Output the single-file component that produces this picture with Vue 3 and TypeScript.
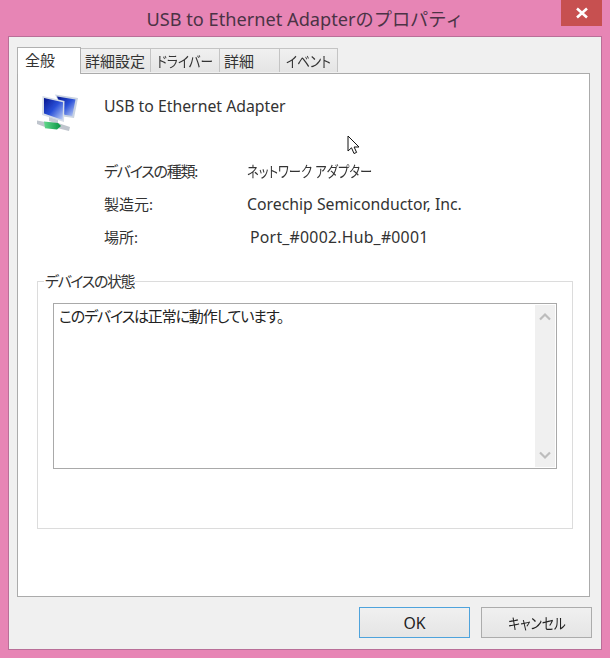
<script setup lang="ts">
const tabs = [
  { label: '全般', width: 64, active: true, narrow: false },
  { label: '詳細設定', width: 70, narrow: false },
  { label: 'ドライバー', width: 69, narrow: true },
  { label: '詳細', width: 60, narrow: false },
  { label: 'イベント', width: 58, narrow: true },
]
const rows = [
  { label: 'デバイスの種類:', value: 'ネットワーク アダプター', latin: false, tight: true },
  { label: '製造元:', value: 'Corechip Semiconductor, Inc.', latin: true },
  { label: '場所:', value: 'Port_#0002.Hub_#0001', latin: true, shifted: true },
]
</script>

<template>
  <div class="window">
    <header class="titlebar">
      <h1 class="title">USB to Ethernet Adapterのプロパティ</h1>
      <button class="close" aria-label="閉じる">
        <svg width="14" height="12" viewBox="0 0 14 12"><path d="M2 1.5l10 9M12 1.5l-10 9" stroke="#fff" stroke-width="2.6" fill="none" /></svg>
      </button>
    </header>

    <div class="client">
      <nav class="tabs">
        <div v-for="t in tabs" :key="t.label" class="tab" :class="{ active: t.active }" :style="{ width: t.width + 'px' }">
          <span :class="{ narrow: t.narrow }">{{ t.label }}</span>
        </div>
      </nav>

      <section class="panel">
        <div class="device">
          <svg class="device-icon" width="42" height="42" viewBox="0 0 42 42">
            <defs>
              <linearGradient id="scr" x1="0" y1="0" x2="1" y2="1">
                <stop offset="0" stop-color="#06168f" />
                <stop offset="0.5" stop-color="#2a50d8" />
                <stop offset="1" stop-color="#c4d4f6" />
              </linearGradient>
              <linearGradient id="cable" x1="0" y1="0" x2="1" y2="0">
                <stop offset="0" stop-color="#63d88c" />
                <stop offset="1" stop-color="#079544" />
              </linearGradient>
              <filter id="soft"><feGaussianBlur stdDeviation="0.35" /></filter>
            </defs>
            <g filter="url(#soft)">
              <path d="M19 1.5l23 3.5-4 20-11-1.5-3-12z" fill="#c9d3e2" />
              <path d="M21 3.5l18.5 3-3.2 16.5-8-1.2z" fill="url(#scr)" />
              <path d="M6.5 3l22 5-.5 21L6 22z" fill="#d6dde8" />
              <path d="M8 5l19 4.2-.3 17.8L8 20.5z" fill="url(#scr)" />
              <path d="M13 24l9 3v4l-9-3z" fill="#c5cbd4" />
              <path d="M1 27.5l8 1.5 13 1 12 4-1 4-12-3-12-1-8-3z" fill="#bfc5cd" />
              <path d="M8 28.5l14 1.5 3 3-4 3.5-12-1.2z" fill="url(#cable)" />
            </g>
          </svg>
          <span class="device-name">USB to Ethernet Adapter</span>
        </div>

        <dl class="props">
          <div v-for="r in rows" :key="r.label" class="prop">
            <dt :class="{ tight: r.tight }">{{ r.label }}</dt>
            <dd :class="{ shifted: r.shifted, latin: r.latin }">
              <span :class="{ narrow: !r.latin }">{{ r.value }}</span>
            </dd>
          </div>
        </dl>

        <fieldset class="group">
          <legend>デバイスの状態</legend>
          <div class="status">
            <p>このデバイスは正常に動作しています。</p>
            <div class="scrollbar">
              <svg width="14" height="9" viewBox="0 0 14 9"><path d="M2 7.5l5-5 5 5" stroke="#bdbdbd" stroke-width="2.2" fill="none" /></svg>
              <svg width="14" height="9" viewBox="0 0 14 9"><path d="M2 1.5l5 5 5-5" stroke="#bdbdbd" stroke-width="2.2" fill="none" /></svg>
            </div>
          </div>
        </fieldset>
      </section>

      <footer class="actions">
        <button class="btn default latin">OK</button>
        <button class="btn"><span class="narrow-center">キャンセル</span></button>
      </footer>
    </div>

    <svg class="cursor" width="14" height="20" viewBox="0 0 14 20">
      <path d="M1 1v15l3.5-3.2L7 18.5l2.6-1.1-2.5-5.4H12z" fill="#fff" stroke="#111" stroke-width="1" />
    </svg>
  </div>
</template>

<style scoped>
.window {
  position: relative;
  box-sizing: border-box;
  width: 610px;
  height: 658px;
  padding: 0 8px 8px;
  display: flex;
  flex-direction: column;
  background: #e785b5;
  font-family: "Noto Sans", "Noto Sans CJK JP", sans-serif;
  font-feature-settings: "palt";
  color: #222;
  overflow: hidden;
}
.narrow {
  display: inline-block;
  white-space: nowrap;
  margin-left: 1.5px;
  transform: scaleX(0.84);
  transform-origin: left center;
}
.narrow-center {
  display: inline-block;
  transform: scaleX(0.85);
}
.titlebar {
  flex: 0 0 36px;
  display: flex;
  align-items: center;
  justify-content: center;
}
.title {
  margin: 0;
  font-size: 18.2px;
  font-weight: 400;
  color: #4b3345;
  white-space: nowrap;
  font-feature-settings: normal;
}
.close {
  position: absolute;
  top: 0;
  right: 8px;
  width: 41px;
  height: 26px;
  padding: 0;
  border: 0;
  background: #c75050;
  display: flex;
  align-items: center;
  justify-content: center;
}
.client {
  flex: 1;
  display: flex;
  flex-direction: column;
  padding: 9px 9px 0 8px;
  background: #f0f0f0;
  border: 1px solid #b96f98;
}
.tabs {
  display: flex;
  align-items: flex-end;
  height: 27px;
  position: relative;
  z-index: 1;
}
.tab {
  box-sizing: border-box;
  height: 24px;
  padding-left: 4px;
  margin-bottom: 1px;
  font-size: 15px;
  line-height: 25px;
  background: linear-gradient(#f0f0f0, #e5e5e5);
  border: 1px solid #c4c4c4;
  border-bottom: 0;
  border-left-width: 0;
  white-space: nowrap;
  color: #333;
}
.tab.active {
  height: 27px;
  margin-bottom: -1px;
  padding-left: 7px;
  line-height: 25px;
  background: #fff;
  border: 1px solid #b0b0b0;
  border-bottom: 0;
}
.panel {
  box-sizing: border-box;
  height: 524px;
  margin-right: 2px;
  padding: 14px 16px 0 19px;
  background: #fff;
  border: 1px solid #ababab;
  display: flex;
  flex-direction: column;
}
.device {
  display: flex;
  align-items: center;
  height: 42px;
}
.device-icon {
  flex: none;
  align-self: flex-start;
  margin: 5px 0 0 -1px;
}
.device-name {
  margin-left: 26px;
  margin-top: -6px;
  font-size: 15.8px;
  color: #333;
}
.props {
  margin: 31px 0 0 67px;
  display: flex;
  flex-direction: column;
  gap: 13px;
}
.prop {
  display: flex;
  height: 20px;
  line-height: 20px;
  font-size: 15px;
  color: #333;
}
.prop dt {
  width: 143px;
}
.prop dt.tight {
  letter-spacing: -1.25px;
}
.prop dd {
  margin: 0;
}
.prop dd .narrow {
  margin-left: 0;
  transform: scaleX(0.82);
}
.prop dd.latin {
  font-size: 15.8px;
}
.prop dd.shifted {
  margin-left: 3px;
  letter-spacing: 0.25px;
}
.group {
  box-sizing: border-box;
  margin: 24px 0 0;
  padding: 12px 15px 0;
  height: 258px;
  border: 1px solid #dcdcdc;
}
.group legend {
  margin-left: -9px;
  padding: 0 1px;
  font-size: 15px;
  line-height: 20px;
  letter-spacing: -1.4px;
  color: #333;
}
.status {
  position: relative;
  box-sizing: border-box;
  height: 166px;
  border: 1px solid #a9a9a9;
  padding: 2px 5px;
  font-size: 15px;
  letter-spacing: -1.15px;
  color: #222;
}
.status p {
  margin: 0;
  line-height: 20px;
}
.scrollbar {
  position: absolute;
  top: 1px;
  right: 1px;
  bottom: 1px;
  width: 20px;
  background: #f0f0f0;
  display: flex;
  flex-direction: column;
  align-items: center;
  justify-content: space-between;
  padding: 7px 0;
  box-sizing: border-box;
}
.actions {
  flex: 1;
  display: flex;
  justify-content: flex-end;
  align-items: flex-start;
  gap: 11px;
  padding-top: 10px;
}
.btn {
  box-sizing: border-box;
  width: 111px;
  height: 31px;
  padding: 0;
  font: 15px "Noto Sans", "Noto Sans CJK JP", sans-serif;
  font-feature-settings: "palt";
  color: #222;
  background: linear-gradient(#f0f0f0, #e5e5e5);
  border: 1px solid #acacac;
}
.btn.latin {
  font-size: 15.8px;
}
.window .btn.default {
  border: 1px solid #4ea3dc;
}
.cursor {
  position: absolute;
  left: 347px;
  top: 135px;
}
</style>
